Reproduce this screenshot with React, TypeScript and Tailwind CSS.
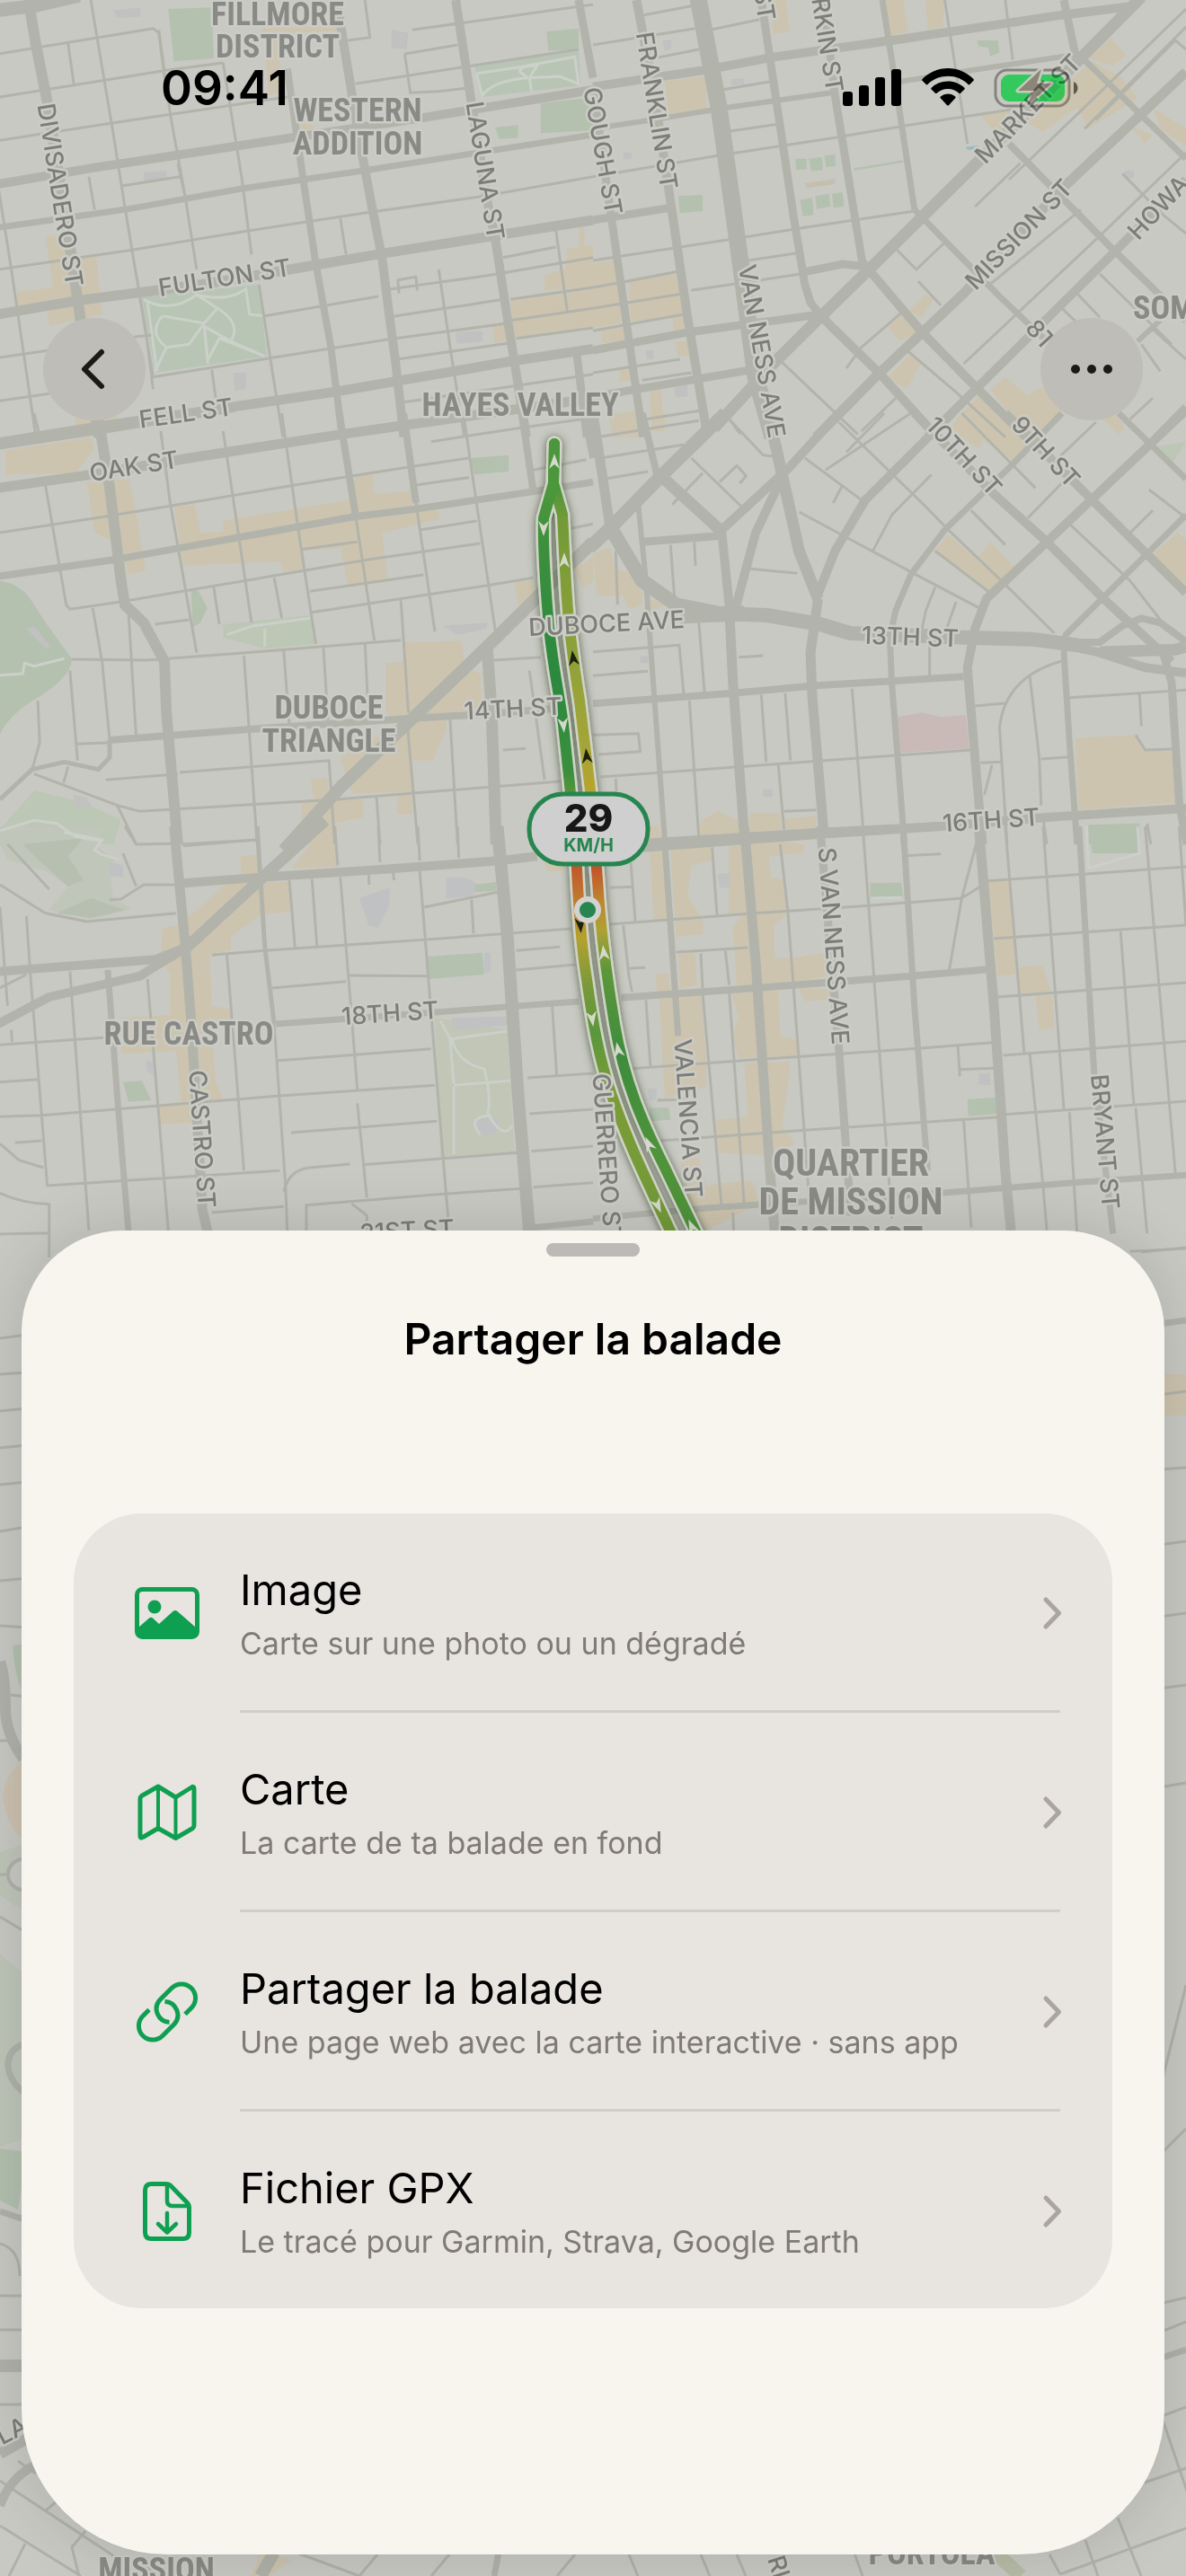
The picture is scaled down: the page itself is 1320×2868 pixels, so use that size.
import type { ReactNode } from "react";

type Tile = {
  id: string;
  x: number;
  y: number;
  areas: [string, string][];
  roads: [number, string][];
};

const SAND = "#cdc4af";
const GRASS = "#b4c1af";
const PARK = "#bdc7b6";

/* Street geometry, one entry per map tile, in tile units (1568 x 1440 over 660 x 480). */
const tiles: Tile[] = [
  {
    id: "nw",
    x: 0,
    y: 0,
    areas: [
      [SAND, "M120 790 180 780 210 860 255 860 270 1050 130 1088 125 1030 45 1022 45 975 140 960Z M200 1390 310 1390 300 1410 240 1430 200 1430Z"],
      [SAND, "M690 95 890 85 890 105 740 112 740 310 710 320 700 140Z M790 415 830 415 830 432 790 432Z"],
      [SAND, "M1350 1005 1568 955 1568 1090 1360 1130Z M1500 830 1530 825 1530 760 1545 760 1545 820 1568 820 1568 960 1440 970 1440 920 1495 900Z M1300 1085 1360 1070 1370 1130 1310 1145Z"],
      [GRASS, "M445 30 560 25 565 195 460 205Z M1445 105 1530 95 1530 165 1450 170Z M1430 345 1568 325 1568 435 1430 445Z M1310 425 1370 418 1370 460 1320 465Z"],
      ["#b8c5b5", "M375 990 685 950 705 1190 410 1245Z M1255 220 1530 170 1535 285 1270 325Z"],
      ["#c0c1c0", "M300 35 370 25 372 55 310 60Z M380 575 440 570 440 600 380 605Z M1035 100 1080 110 1075 165 1035 160Z M1205 1110 1275 1105 1275 1140 1208 1148Z M618 1245 650 1245 650 1300 620 1305Z"],
    ],
    roads: [
      [15, "M-10 35 90 20 210 -15"],
      [12, "M75 0 95 150 125 340 180 780 205 1000 240 1300 262 1460"],
      [10, "M-5 615 250 560 770 460 1110 395 1568 300"],
      [11, "M-5 1050 200 1005 560 945 835 885 1020 845 1568 735"],
      [11, "M-10 1480 260 1425 880 1310 1360 1205 1568 1165"],
      [7, "M-5 760 330 700 640 630 960 570 1568 450"],
      [8, "M760 230 790 500 835 880 875 1160 905 1460"],
      [10, "M890 0 930 310 955 500 985 700 1010 860 1030 1060 1045 1200 1068 1460"],
      [10, "M1205 0 1245 330 1290 680 1310 800 1340 1050 1392 1460"],
      [9, "M1530 0 1568 260 M1525 1180 1552 1460"],
      [3, "M240 0 300 450 330 690 355 880 385 1100 405 1300 M420 100 450 380 490 660 520 900 M590 210 640 600 665 850 M685 950 715 1200 748 1460 M-5 180 405 95 420 110 435 260 M180 145 195 280 M-5 325 440 235 590 210 M-5 470 300 410 780 320 M-5 900 350 835 660 770 970 710 1280 655 1568 590 M235 590 250 700 M325 620 475 590 M470 545 490 660 M-5 1195 130 1170 M-5 1340 130 1315 M-5 620 30 900 95 1460 M700 1055 1000 990 M400 1260 720 1195 1020 1135 1340 1080 M370 995 405 1260 M355 1125 400 1120 M900 730 915 850"],
      [3, "M1160 900 1195 1200 1228 1460 M1030 1050 1040 1057 1330 1000 M1050 1200 1350 1145 M1010 970 1290 920 1568 860 M1055 980 1052 935 1100 925 1103 970 M920 135 978 125 965 0 M1070 180 1210 150 M1070 180 1085 310 1160 305 1230 295 M940 280 1220 225 1530 165 M1090 100 1568 15 M1470 770 1500 1040 M1330 860 1470 825 M1350 1000 1568 960 M1350 1070 1568 1030 M1365 1130 1568 1095 M560 1235 575 1370 M1060 1345 1568 1250"],
    ],
  },
  {
    id: "ne",
    x: 660,
    y: 0,
    areas: [
      [SAND, "M190 270 300 255 300 375 200 390Z M475 0 510 0 520 105 475 115Z M770 0 820 0 835 105 785 120Z M880 0 930 0 925 90 885 100Z M1370 125 1410 185 1370 220 1310 195Z M1320 205 1400 260 1440 330 1310 430 1280 360 1190 440 1150 410 1260 270Z M1025 385 1110 370 1090 440 1060 440Z M1480 360 1568 430 1568 490 1500 430Z M1420 420 1480 450 1460 480Z"],
      [SAND, "M0 880 60 870 75 1080 0 1095Z M95 930 220 910 240 1050 100 1075Z M20 1100 80 1095 95 1140 25 1145Z M210 1060 240 1060 240 1110 215 1110Z M880 985 900 1000 870 1060 835 1040Z M780 1090 820 1050 860 1110 810 1140Z M840 1180 870 1210 830 1300 780 1260Z M960 1400 1020 1320 1120 1440 1120 1460 940 1460Z M1050 1300 1090 1260 1150 1320 1190 1290 1240 1370 1170 1450 1130 1430Z M45 1390 110 1370 120 1460 50 1460Z M70 1230 100 1225 100 1270 70 1275Z M215 1140 255 1140 255 1190 225 1190Z M150 1300 180 1300 190 1440 155 1440Z"],
      [GRASS, "M535 530 565 530 565 565 537 567Z M570 530 605 525 608 568 578 572Z M612 520 640 515 642 555 616 558Z M548 668 580 660 583 718 555 722Z M587 655 625 648 627 690 592 698Z M632 648 660 642 664 690 636 694Z M225 655 290 650 290 705 230 712Z M1015 135 1070 135 1075 175 1050 188 1045 158 1020 155Z M690 562 820 535 820 542 690 570Z"],
      ["#98bcbc", "M985 492 1020 485 1003 500 990 500Z"],
      ["#c6beaf", "M560 612 640 598 640 615 565 628Z"],
      ["#c0c1c0", "M185 135 208 135 205 165 188 168Z M365 265 400 262 400 282 368 284Z M80 510 105 510 100 530 80 530Z M215 1295 250 1285 250 1325 218 1325Z M140 1170 160 1170 160 1200 142 1200Z M1405 570 1430 570 1430 595 1408 598Z"],
    ],
    roads: [
      [19, "M278 -5 333 360 388 860 430 1260 475 1460"],
      [13, "M1450 -10 1010 550 730 900 600 1060 480 1210 320 1430"],
      [10, "M0 290 290 235 480 190 790 135 1240 50 1430 20"],
      [9, "M1245 0 1275 180"],
      [7, "M1295 195 1450 385 1568 530"],
      [11, "M1568 240 1240 630 980 980 750 1255 590 1460"],
      [10, "M1568 600 1380 840 1020 1290 885 1460"],
      [10, "M115 0 160 300 200 630 250 1060 303 1460"],
      [9, "M0 290 50 740 132 1460 M445 0 530 720 560 950 575 1010 600 1050"],
      [9, "M610 0 640 320 715 900 M560 908 660 882 720 890"],
      [10, "M715 880 870 1110 1010 1290 1145 1460 M600 1050 630 1090 760 1250 910 1460"],
      [7, "M850 700 1075 990 1200 1140 M765 0 790 200 850 700"],
      [8, "M1100 480 1380 840 1568 1070"],
      [9, "M0 735 200 695 M0 1170 250 1110 600 1050 M0 1325 420 1235 M1568 1360 1490 1460"],
      [6, "M0 430 160 400 350 360 630 310 M800 275 1000 235 1290 180 M1440 1140 1500 1070"],
      [3, "M0 590 330 520 640 460 850 415 1110 365 M0 870 360 800 560 760 850 705 M0 150 270 95 M160 195 280 165 M135 50 260 20 M310 100 440 65 M340 300 480 270 M350 440 490 415 M410 870 540 845 M260 970 550 915 M0 960 90 940 230 905 M0 1030 240 980 M0 1105 240 1050 M930 0 990 480 M1090 0 1110 200 M800 830 855 900 930 810 M1130 545 1010 690"],
      [3, "M1568 30 1290 370 1100 600 M1568 90 1300 430 M1568 165 1540 135 1330 400 M1400 580 1500 710 1568 780 M1568 510 1330 800 980 1215 M1290 700 1040 960 M1340 915 1530 1150 M860 940 920 1020 M820 1040 710 1160 670 1230 M830 1170 960 1310 1090 1460 M500 1210 700 1450 M360 1400 390 1450 M1240 1030 1290 1090 M1280 980 1340 1060 M1450 1150 1500 1240 M1480 1100 1568 1200 M1480 1330 1420 1400 M0 1245 230 1200 M130 1270 260 1245 M140 1400 290 1370 M710 1440 800 1330"],
    ],
  },
  {
    id: "w",
    x: 0,
    y: 460,
    areas: [
      [SAND, "M15 125 240 80 250 120 200 200 15 205Z M230 230 340 220 355 300 385 525 340 540 320 440 250 400Z M460 310 515 305 530 400 590 395 590 360 920 290 940 210 985 205 990 270 1085 260 1090 310 1160 325 1160 355 1010 400 1025 550 920 575 900 450 800 460 800 525 750 530 740 495 485 510Z"],
      [SAND, "M1020 835 1065 830 1070 765 1220 760 1230 850 1270 870 1275 1000 1180 1010 1180 1060 1145 1160 1090 1160 1095 1265 930 1270 900 1150 1050 1040 1020 1000Z M1360 560 1410 560 1410 640 1370 645Z M820 1220 865 1220 870 1290 960 1290 960 1350 885 1370 885 1440 790 1440 800 1300 830 1290Z M1050 1275 1090 1275 1090 1340 1050 1340Z M1520 520 1568 480 1568 560 1540 590Z"],
      ["#b5c1af", "M0 560Q60 570 90 640Q130 720 190 820Q190 880 100 950Q30 1000 0 1070Z"],
      [PARK, "M0 1390 90 1260 220 1300 320 1360 300 1440 0 1440Z M590 705 820 675 835 770 700 785 590 750Z"],
      [GRASS, "M505 585 525 595 548 650 530 700 510 715Z M1245 150 1345 140 1345 195 1255 205Z"],
      ["#c0c1c0", "M70 720 90 712 135 780 120 785Z M195 1275 230 1285 240 1310 200 1315Z M1170 710 1290 700 1285 720 1210 740Z"],
    ],
    roads: [
      [11, "M-10 107 260 55 620 -20"],
      [11, "M-5 250 270 200 500 150 905 70 1568 -50"],
      [12, "M258 0 290 250 320 560 330 640 380 700 435 830 440 1000 470 1440"],
      [8, "M-5 545 300 490 940 345 1100 320 1420 260 1568 230"],
      [8, "M290 1092 700 1052 1080 1020 1220 1010 1490 985"],
      [14, "M1568 430 1400 640 1280 790 900 1250 750 1460"],
      [13, "M1288 780 1300 1000 1312 1440"],
      [8, "M897 0 940 340 M1067 0 1100 300 M1380 0 1410 260"],
      [9, "M1545 0 1570 150"],
      [5, "M0 1290 85 1190 170 1165 260 1190 290 1150 290 1090"],
      [3, "M90 0 110 100 M120 240 175 640 185 655 320 630 970 490 1270 435 M-5 400 280 345 450 310 780 240 1080 180 1240 150 M425 60 450 300 520 800 M590 60 630 400 665 700 M745 0 790 400 835 770 M565 580 580 705 M725 550 745 685 M820 595 1120 540 M825 665 980 635 1290 575 1410 550 M410 705 500 690 M940 340 990 760 M1100 300 1150 730 M1060 625 1080 1000 M1225 0 1310 730 M190 822 390 825 650 800 1060 758 M1100 240 1240 215 M1110 390 1260 360 M795 455 945 430"],
      [3, "M245 650 270 830 290 1090 M340 670 360 1080 M185 860 205 1160 M100 960 105 1100 85 1190 M645 810 680 1440 M750 790 765 1040 M855 780 868 1040 M965 765 975 1030 M475 1200 870 1160 885 1440 M280 1225 470 1205 M90 1205 310 1310 370 1330 890 1290 1480 1230 M310 1310 360 1440 M995 1275 1005 1440 M1075 1010 1105 1440 M1190 1020 1210 1440 M1400 860 1440 1225 M1305 825 1430 815 M1330 1125 1390 1120 M480 1440 680 1425 M180 1180 168 1235 M205 1105 290 1100 M1140 95 1370 50 1568 15 M1410 190 1550 155 M1510 385 1568 370"],
    ],
  },
  {
    id: "e",
    x: 660,
    y: 460,
    areas: [
      [SAND, "M40 0 130 0 130 50 50 65Z M165 0 190 0 190 35 160 40Z M0 470 45 450 60 520 90 530 130 600 130 640 95 655 80 610 10 610Z M150 620 200 640 150 660Z M970 5 1080 0 1140 60 1160 100 1110 155 1030 90 1020 120 945 55Z M1180 0 1245 0 1200 40Z M1355 0 1380 0 1405 45 1390 70 1350 25Z M940 405 1080 560 1055 600 900 465Z M1050 430 1115 515 1085 560 1020 480Z M1480 470 1545 400 1568 420 1568 580Z"],
      [SAND, "M1275 1085 1440 1075 1460 1125 1530 1130 1540 1300 1285 1325Z M280 1420 285 1360 330 1330 385 1360 385 1410Z M415 1335 495 1335 500 1390 415 1405Z M505 1355 590 1345 590 1390 505 1395Z M140 1380 175 1380 180 1430 140 1430Z"],
      ["#c9bab7", "M805 1015 870 1000 920 1015 985 1008 995 1120 808 1135Z"],
      [GRASS, "M1310 1375 1445 1370 1445 1440 1310 1440Z"],
      [PARK, "M1490 110 1568 95 1530 170Z"],
      ["#bfc0c0", "M450 1258 475 1258 475 1280 450 1280Z M125 812 145 812 145 835 125 835Z"],
    ],
    roads: [
      [15, "M350 0 180 210 45 385 -10 450"],
      [11, "M0 0 45 380 130 560"],
      [16, "M45 380 130 560 220 640 330 668 460 675 600 705 680 735 1000 750 1160 755 1280 775"],
      [17, "M230 678 400 668"],
      [10, "M1250 775 1340 800 1460 850 1568 868"],
      [8, "M1250 765 1340 765 1400 710 1450 685 1500 700 1570 765"],
      [13, "M1340 798 1540 790 1568 780"],
      [13, "M462 0 485 120 545 460 595 620"],
      [11, "M595 620 575 800 580 950 610 1400"],
      [10, "M650 0 520 180 340 390 360 640 M490 240 430 400 375 660"],
      [11, "M360 640 370 900 400 1410"],
      [13, "M180 210 340 395"],
      [9, "M130 430 330 410"],
      [10, "M950 0 720 290 640 460 590 620"],
      [7, "M1240 0 1110 170 930 390 840 540 800 660 785 750 790 900 820 1380 822 1440"],
      [10, "M1568 -10 1200 430 1040 620 1010 720 990 850 1010 1150 1030 1440"],
      [10, "M850 0 1060 270 1200 430 1350 620 1530 830 M1090 0 1320 290 1568 600"],
      [7, "M1390 0 1568 220 M1568 340 1250 740 1245 800 1260 1100 1280 1440"],
      [9, "M1510 810 1530 900 1550 1300 1570 1440"],
      [8, "M0 970 160 955 370 935 590 910 980 880"],
      [10, "M140 1436 600 1400 920 1380 1200 1350 1568 1320"],
      [8, "M130 0 170 210"],
      [6, "M120 310 140 560 150 740 190 1430"],
      [3, "M10 80 280 25 M20 150 240 105 M30 220 145 195 M205 440 215 610 M268 430 271 510 M415 520 540 535 M545 330 840 530 1020 650 M560 150 710 290 M650 30 870 300 940 390 1080 560 1220 735 M840 0 615 190 M770 0 670 130 M895 205 790 340 740 460 M660 240 635 300 M260 150 395 315 M335 230 380 175 405 210 388 235 M290 200 210 305 M360 20 450 140 480 145 M905 460 1050 600 M905 580 880 660 870 720 M960 630 935 720 M1000 325 1090 440 M975 0 1170 250 M1330 30 1230 150 M1250 220 1150 350"],
      [3, "M1260 370 1420 560 1500 690 M1480 325 1420 400 M1470 255 1568 350 M890 770 890 880 M385 815 450 810 M0 797 228 775 240 940 M0 877 145 862 M280 700 295 935 M255 960 280 1420 M445 940 458 1165 M508 935 522 1160 M685 920 715 1400 M20 1215 400 1180 1000 1125 M490 1175 505 1390 M1010 978 1095 968 M1240 828Q1090 880 1075 1050L1095 1440 M1155 880 1180 1150 1185 1310 M1185 1155 1260 1148 M1025 1168 1080 1165 M1055 1175 1035 1275 M1260 950 1568 925 M1445 935 1450 1045 M1435 1075 1460 1125 1530 1122 M15 1140 125 1130 120 1070 0 1075 M505 1330 590 1325 M1190 1350 1200 1440 M1465 1370 1475 1440 M60 1220 62 1265 M60 460 65 640"],
    ],
  },
  {
    id: "sw",
    x: 0,
    y: 920,
    areas: [
      [SAND, "M635 100 680 95 685 160 640 160Z M770 140 860 0 890 0 895 135Z M430 340 475 330 600 190 765 185 770 285 690 295 610 370 610 415 555 425 560 600 605 610 615 660 560 680 570 850 590 910 480 930 465 750 320 760 320 640 450 630 450 500 425 430Z M420 935 505 930 510 990 425 995Z M1440 120 1500 115 1490 150 1445 150Z"],
      ["#c0c6ba", "M0 0 280 0 250 60 300 110 290 150 300 240 350 275 240 310 130 280 180 200 120 150 20 110 0 60Z"],
      ["#c1c6b7", "M1150 640 1340 680 1360 1090 1165 1105Z"],
      ["#b7bfb0", "M60 60 220 40 180 100 220 180 180 200 100 110Z M150 290 240 240 330 280 240 305Z"],
      [GRASS, "M1130 435 1275 422 1280 495 1135 510Z M325 855 375 850 400 915 340 920Z M1255 195 1315 185 1310 215 1255 220Z"],
      ["#c0c1c2", "M1180 170 1225 170 1260 190 1250 235 1180 240Z M950 240 1030 205 1030 260 1000 340 975 330Z M1195 640 1340 635 1340 665 1200 680Z M1255 975 1320 975 1310 1030 1270 1030Z M1280 422 1298 422 1298 485 1280 488Z M290 120 325 130 325 170 290 165Z M385 780 405 790 405 830 390 820Z"],
    ],
    roads: [
      [11, "M460 0 490 400 505 640 535 1280 550 1360"],
      [13, "M860 -20 690 175 540 350 480 420"],
      [10, "M500 400 420 460 370 500 130 570 -5 660"],
      [10, "M485 190 690 170 1000 145 1320 115 1420 100 M-5 485 410 445 480 410"],
      [14, "M1315 0 1340 340 1370 900 1400 1360"],
      [7, "M730 660 1160 620 1530 585 M285 480 310 900 340 1360 M1410 1340 1568 1320"],
      [5, "M680 0 700 400 725 660"],
      [3, "M725 660 755 1200 760 1360 M765 180 780 405 M825 175 838 400 M900 170 925 560 945 880 M1110 150 1145 700 1185 1310 M1040 155 1042 180 M975 160 976 195 M885 0 893 130 M1000 0 1005 120 M1105 0 1110 115 M1210 0 1213 105 M485 65 680 45 M560 430 700 415 1130 378 1510 342 M330 0 360 60 460 58 M325 90 360 200 M290 245 320 243 380 195 465 195 M0 195 120 290 230 318 465 290 M600 430 645 1150 M390 510 445 1350 M185 485 235 1350 M80 490 125 1200 740 1150 M0 730 280 705 M-5 855 100 845 M-5 970 110 965 740 900 1150 865 M40 1057 110 1050 M720 540 915 518 M925 498 1130 500"],
      [3, "M730 783 1140 743 M770 1023 1155 985 M945 925 970 1240 M750 1220Q765 1145 820 1140L925 1128 M960 1130 1370 1090 M810 1355 810 1265 1150 1230 1380 1210 M560 1290 750 1270 M0 270 20 600 M70 300 80 490 M0 540 70 495 M1122 270 1315 220 M1247 245 1252 358 M1365 415 1480 403 M1365 480 1520 462 M1395 840 1568 825 M1400 960 1568 945 M1405 1085 1568 1068 M1410 1205 1568 1190 M1460 600 1472 830 M0 1060 50 1115 115 1140 M0 1225Q60 1260 130 1262L130 1440 M0 1362 130 1358 M30 680 32 720 M20 60 130 210 M930 1260 970 1300 970 1350"],
    ],
  },
  {
    id: "se",
    x: 660,
    y: 920,
    areas: [
      [SAND, "M150 80 190 80 200 310 160 315Z M205 75 310 68 315 115 260 130 250 230 290 310 290 360 220 370Z M360 60 495 50 560 60 555 90 465 100 470 170 505 180 515 290 480 330 480 440 530 440 620 420 620 500 535 520 380 530 370 340 390 300 360 290Z M225 425 270 420 275 530 230 540Z M165 495 200 490 205 560 170 570Z M175 575 225 570 285 560 300 790 300 870 190 910Z M365 550 490 545 495 700 545 715 545 765 385 775 370 700 385 640Z"],
      [SAND, "M400 790 520 785 520 830 500 1000 535 1060 470 1100 330 1090 325 980 410 970Z M230 1100 280 1110 300 1200 420 1180 440 1260 300 1350 260 1300Z M545 540 640 545 620 580 560 585Z M1045 185 1105 185 1120 495 1070 500Z M1125 470 1190 465 1210 555 1130 560Z M1170 565 1215 565 1220 675 1180 680Z"],
      [GRASS, "M1310 0 1445 0 1445 90 1320 90Z M733 190 815 188 820 235 733 240Z M990 912 1065 905 1070 960 992 968Z M150 940 200 940 205 980 150 985Z"],
      ["#c0c1c1", "M330 160 360 155 360 205 335 205Z M1020 825 1050 825 1050 865 1020 862Z M145 875 170 875 165 915 150 915Z"],
    ],
    roads: [
      [11, "M400 0 430 450 465 1100 480 1350 M1020 0 1060 600 1090 1150 1105 1350"],
      [9, "M600 0 650 740 682 1300"],
      [7, "M820 0 850 600 885 1150 M1285 0 1325 820 1375 1360 M190 60 225 700 M0 1310 300 1275 480 1260 920 1225 1270 1190 1568 1165"],
      [10, "M0 85 150 70 400 45 620 25 920 0"],
      [8, "M75 572 430 540 840 500 1045 478"],
      [3, "M45 327 410 292 730 265 975 240 1025 200 M100 120 112 320 M315 70 328 298 M495 60 515 280 575 1300 M45 205 103 202 M220 420 410 405 M285 425 290 540 M350 415 360 530 M80 330 95 500 103 552 M90 475 138 472 M140 580 152 805 M95 810 420 780 860 742 1055 722 M290 560 340 1270 M360 550 400 1265 M715 30 790 1310 M830 98 920 92 M1015 50 975 240 942 480 M1090 0 1140 755 M1190 0 1245 945 M1045 182 1568 135 M1060 375 1568 330 M1070 570 1568 522 M1085 765 1568 718"],
      [3, "M1090 962 1568 918 M1460 0 1540 1160 M1395 350 1430 930 M1155 760 1190 1200 1200 1350 M965 735 970 835 M970 812 1060 808 M180 1050 560 1015 1090 970 M980 980 1000 1340 M1260 955 1280 1360 M1435 940 1465 1360 M1420 1420 1568 1410 M1550 0 1568 330 M170 915 245 912 M370 1290 372 1350"],
    ],
  },
];

/* Park footpaths, in tile units. */
const footpaths: [number, number, string][] = [
  [0, 0, "M380 1000Q450 1050 520 985Q600 1010 650 965L660 1050 700 1055 M520 985 575 1030 540 1080 430 1055 M430 1055Q390 1110 440 1160L410 1240 M440 1160 500 1150 540 1080 M575 1030Q640 1080 610 1140L540 1090 550 1215 M610 1140 700 1190 580 1130 550 1200 M390 1010 415 1240"],
  [0, 0, "M1260 245 1370 225 1520 190 1530 280 1480 255 1400 260 1405 305 M1260 245 1275 320Q1300 270 1395 260L1375 240Q1370 220 1420 220L1400 260"],
  [0, 460, "M0 875 60 870 65 835 90 845 170 820 M0 1395 90 1360 150 1370 200 1415 270 1430 M600 740 670 710 820 685 M700 780 700 720"],
  [0, 920, "M170 20 270 45 250 80 270 95 315 110 M1165 650 1190 710 1340 685 M1195 710Q1210 790 1280 810Q1300 900 1290 960Q1330 1050 1355 1000 M1200 865 1350 850 M1200 870 1200 1095 M1190 710 1200 860 M1270 1030Q1230 970 1300 965"],
  [660, 920, "M1305 0 1310 140 1445 90 1440 0 M735 240 815 238"],
];

type Label = [string, number, number, number, ("start" | "middle")?];

const streets: Label[] = [
  ["DIVISADERO ST", 67, 217, 81],
  ["LAGUNA ST", 540, 190, 81],
  ["FULTON ST", 250, 309, -9],
  ["FELL ST", 207, 460, -8],
  ["OAK ST", 149, 519, -9],
  ["GOUGH ST", 671, 168, 80],
  ["FRANKLIN ST", 731, 123, 81],
  ["VAN NESS AVE", 848, 391, 80],
  ["ST", 851, 5, 81],
  ["RKIN ST", 921, 50, 81],
  ["MARKET ST", 1144, 121, -46],
  ["MISSION ST", 1134, 261, -46],
  ["HOWA", 1260, 262, -47, "start"],
  ["8TH ST", 1147, 360, 48, "start"],
  ["10TH ST", 1073, 508, 47],
  ["9TH ST", 1164, 503, 47],
  ["DUBOCE AVE", 675, 694, -3],
  ["14TH ST", 571, 789, -3],
  ["13TH ST", 1013, 709, 2],
  ["16TH ST", 1103, 913, -4],
  ["18TH ST", 434, 1128, -4],
  ["21ST ST", 453, 1370, -3],
  ["CASTRO ST", 225, 1268, 86],
  ["GUERRERO ST", 669, 1195, 86, "start"],
  ["VALENCIA ST", 766, 1245, 86],
  ["S VAN NESS AVE", 928, 1053, 86],
  ["BRYANT ST", 1230, 1271, 85],
  ["RI", 863, 2846, 72, "start"],
  ["LA", -2, 2714, -27, "start"],
];

const districts: Label[] = [
  ["FILLMORE", 309, 16, 36],
  ["DISTRICT", 309, 52, 36],
  ["WESTERN", 398, 123, 36],
  ["ADDITION", 398, 160, 36],
  ["HAYES VALLEY", 579, 451, 36],
  ["SOMA", 1261, 343, 36, "start"],
  ["DUBOCE", 366, 788, 36],
  ["TRIANGLE", 366, 825, 36],
  ["RUE CASTRO", 210, 1151, 36],
  ["QUARTIER", 947, 1294, 42],
  ["DE MISSION", 947, 1337, 42],
  ["DISTRICT", 947, 1380, 42],
  ["MISSION", 174, 2861, 36],
  ["PORTOLA", 1037, 2843, 36],
];

const OUTBOUND =
  "M617 494 616 538 605 577C604 610 607 650 610 687C613 730 622 770 627 807L634 873 642 967C644 1010 648 1060 653 1090C660 1140 667 1180 681 1220C700 1275 720 1315 760 1400";
const INBOUND =
  "M617 494 616 538 626 573C628 610 629 650 633 690C636 720 641 755 645 780L657 880 665 980C668 1030 674 1080 684 1140C695 1205 715 1250 740 1300L788 1400";

/* Direction arrows along the ride: x, y, heading, dark. */
const arrows: [number, number, number, boolean][] = [
  [617, 514, 0, false],
  [605, 588, 180, false],
  [628, 624, 0, false],
  [638, 733, -8, true],
  [627, 807, 174, false],
  [653, 842, -6, true],
  [646, 1030, 176, true],
  [672, 1061, -6, false],
  [659, 1134, 172, false],
  [688, 1169, -12, false],
  [722, 1274, -24, false],
  [732, 1342, 155, false],
  [770, 1366, -24, false],
];

function CityMap() {
  return (
    <svg
      className="absolute inset-0 h-full w-full"
      viewBox="0 0 1320 2868"
      preserveAspectRatio="xMidYMin slice"
      role="img"
      aria-label="Carte de la balade à San Francisco"
    >
      <defs>
        <linearGradient id="out" gradientUnits="userSpaceOnUse" x1="0" y1="490" x2="0" y2="1370">
          <stop offset="0" stopColor="#4c963b" />
          <stop offset="0.07" stopColor="#4c963b" />
          <stop offset="0.13" stopColor="#3d903d" />
          <stop offset="0.3" stopColor="#2b893f" />
          <stop offset="0.42" stopColor="#3a8f3d" />
          <stop offset="0.49" stopColor="#8a9c36" />
          <stop offset="0.54" stopColor="#c0582c" />
          <stop offset="0.585" stopColor="#bf7d2e" />
          <stop offset="0.63" stopColor="#b3a12f" />
          <stop offset="0.69" stopColor="#79993a" />
          <stop offset="0.75" stopColor="#5a973b" />
          <stop offset="0.82" stopColor="#7b9c38" />
          <stop offset="1" stopColor="#739a38" />
        </linearGradient>
        <linearGradient id="in" gradientUnits="userSpaceOnUse" x1="0" y1="490" x2="0" y2="1370">
          <stop offset="0" stopColor="#4c963b" />
          <stop offset="0.06" stopColor="#4c963b" />
          <stop offset="0.1" stopColor="#739a38" />
          <stop offset="0.25" stopColor="#8ba03a" />
          <stop offset="0.38" stopColor="#a3a538" />
          <stop offset="0.45" stopColor="#b9a42c" />
          <stop offset="0.54" stopColor="#c2522c" />
          <stop offset="0.58" stopColor="#bd832e" />
          <stop offset="0.62" stopColor="#aea233" />
          <stop offset="0.67" stopColor="#5d973a" />
          <stop offset="0.78" stopColor="#3d8c3d" />
          <stop offset="0.9" stopColor="#4f933b" />
          <stop offset="1" stopColor="#4f933b" />
        </linearGradient>
        <filter id="glow" filterUnits="userSpaceOnUse" x="540" y="440" width="300" height="960">
          <feDropShadow dx="0" dy="1" stdDeviation="5" floodColor="#3b4a30" floodOpacity="0.8" />
        </filter>
      </defs>

      <rect width="1320" height="2868" fill="#c8c9c3" />

      {tiles.map((t) => (
        <g key={t.id} transform={`translate(${t.x} ${t.y}) scale(0.42092 0.33333)`}>
          {t.areas.map(([fill, d], i) => (
            <path key={i} d={d} fill={fill} />
          ))}
        </g>
      ))}
      {footpaths.map(([x, y, d], i) => (
        <g key={i} transform={`translate(${x} ${y}) scale(0.42092 0.33333)`}>
          <path d={d} fill="none" stroke="#cbd0c8" strokeWidth="3" vectorEffect="non-scaling-stroke" />
        </g>
      ))}
      {tiles.map((t) => (
        <g
          key={t.id}
          transform={`translate(${t.x} ${t.y}) scale(0.42092 0.33333)`}
          fill="none"
          stroke="#b2b4ac"
          strokeLinejoin="round"
        >
          {t.roads.map(([w, d], i) => (
            <path key={i} d={d} strokeWidth={w} vectorEffect="non-scaling-stroke" />
          ))}
        </g>
      ))}

      {/* Streets that show beside and below the sheet */}
      <rect x="1290" y="1530" width="30" height="46" fill={SAND} />
      <path d="M14 1832Q18 1880 30 1890V1830Z" fill={GRASS} />
      <path d="M30 1958Q4 1972 3 2005Q10 2040 30 2050Z" fill="#cdc2b0" />
      <path d="M0 2062 30 2052 30 2130 0 2110Z M0 2176 30 2200 30 2380 0 2390Z" fill="#bfc6b9" />
      <path d="M0 2392 30 2396 20 2460 0 2450Z" fill={GRASS} />
      <path d="M290 2840 325 2850 300 2868 280 2868Z" fill={SAND} />
      <g fill="none" stroke="#b0b2aa" strokeWidth="3">
        <path d="M0 1490 30 1486 M0 1530 30 1528 M0 1571 30 1568 M0 1612 30 1609 M0 1653 30 1650 M0 1705 30 1700 M0 1760 30 1757 M0 1810 30 1812 M12 1887 30 1889 M0 1938H14 M0 2087H10 M0 2134 30 2152 M0 2498Q22 2504 22 2534 M0 2556H30 M0 2594H30 M0 2677H30 M1270 1394 1320 1389 M1290 1553 1320 1549 M1290 1636 1320 1634 M1290 1720 1320 1716 M1290 1800 1320 1796 M1290 1880 1320 1876 M1290 1990 1320 1985 M1290 2330 1320 2210 M1290 2400 1320 2370 M1290 2565 1320 2558 M1290 2597 1320 2585 M1280 2695 1320 2680" />
        <path d="M0 2762 130 2848 190 2868 M20 2740 40 2754 M50 2796 64 2784 M0 2812 90 2868 M28 2832 10 2868 M95 2818 80 2836 88 2868 M960 2868 950 2840 M1244 2803 1270 2868 M1292 2688 1330 2800 M1274 2764 1320 2748 M1180 2866 1320 2815 M1208 2828 1222 2868 M1168 2844 1180 2866 M330 2842 400 2868 M420 2844 400 2868 M500 2844 480 2868 M640 2844 620 2868 M700 2844 710 2868 M780 2844 790 2868 M820 2844 830 2868" />
        <path d="M38 2745Q10 2760 0 2790" strokeWidth="10" />
        <path d="M32 2714 0 2732 M0 1850Q6 1866 6 1902Q6 1930 26 1958" strokeWidth="12" />
        <path d="M0 2634H30 M305 2842 290 2868" strokeWidth="14" />
        <path d="M30 2275Q8 2280 9 2302Q12 2320 30 2332 M0 2462 30 2472 M1290 1474 1320 1470 M1290 2626 1320 2616 M555 2842 550 2868" strokeWidth="7" />
        <circle cx="26" cy="2087" r="17" strokeWidth="4" fill="#c8c9c3" />
      </g>
      <path d="M1108 2842 1136 2868" stroke="#b7bda8" strokeWidth="16" />

      {/* Ride */}
      <g fill="none" strokeLinecap="round" strokeLinejoin="round">
        <g filter="url(#glow)" stroke="#d0d4c6" strokeWidth="17">
          <path d={OUTBOUND} />
          <path d={INBOUND} />
        </g>
        <path d={INBOUND} stroke="url(#in)" strokeWidth="12" />
        <path d={OUTBOUND} stroke="url(#out)" strokeWidth="12" />
      </g>
      {arrows.map(([x, y, r, dark], i) => (
        <path
          key={i}
          d="M0 -9 6 8 0 3 -6 8Z"
          transform={`translate(${x} ${y}) rotate(${r})`}
          fill={dark ? "#1d2110" : "#d5d9cd"}
        />
      ))}

      <g
        className="font-['Inter',sans-serif] text-[27px] font-medium"
        fill="#7c7d78"
        stroke="#cbccc6"
        strokeWidth="5"
        strokeLinejoin="round"
        paintOrder="stroke"
        dominantBaseline="central"
      >
        {streets.map(([text, x, y, r, anchor = "middle"]) => (
          <text key={text} textAnchor={anchor} transform={`translate(${x} ${y}) rotate(${r})`}>
            {text}
          </text>
        ))}
      </g>
      <g
        className="font-['Liberation_Sans_Narrow','Arial_Narrow','Roboto_Condensed','Liberation_Sans',sans-serif] font-bold"
        fill="#898985"
        stroke="#cbccc6"
        strokeWidth="5"
        strokeLinejoin="round"
        paintOrder="stroke"
        dominantBaseline="central"
      >
        {districts.map(([text, x, y, size, anchor = "middle"]) => (
          <text key={text + y} x={x} y={y} fontSize={size} textAnchor={anchor}>
            {text}
          </text>
        ))}
      </g>

      {/* Current speed and position */}
      <circle cx="654" cy="1013" r="15" fill="#d2d3d0" />
      <circle cx="654" cy="1013" r="9" fill="#27864f" />
      <rect x="589" y="884" width="132" height="78" rx="38" fill="#cfcfd0" stroke="#27864f" strokeWidth="5" />
      <g className="font-['Inter',sans-serif]" textAnchor="middle">
        <text x="655" y="926" fontSize="42" fontWeight="800" fill="#171717">
          29
        </text>
        <text x="655" y="948" fontSize="20" fontWeight="700" fill="#27864f">
          KM/H
        </text>
      </g>
    </svg>
  );
}

function StatusBar() {
  return (
    <header className="flex items-center justify-between pt-[66px] pr-[119px] pl-[179px]">
      <time className="text-[53px] leading-[64px] font-semibold">09:41</time>
      <div className="flex items-center gap-[22px]">
        <svg width="66" height="44" viewBox="0 0 66 44" aria-label="Réseau mobile">
          <rect x="0" y="26" width="11" height="16" rx="3" />
          <rect x="18" y="19" width="11" height="23" rx="3" />
          <rect x="36" y="10" width="11" height="32" rx="3" />
          <rect x="54" y="1" width="11" height="41" rx="3" />
        </svg>
        <svg width="58" height="44" viewBox="0 0 58 44" aria-label="Wi-Fi">
          <path d="M29 0C40 0 50 4.500 57.500 12c.5.5.5 1.300 0 1.800l-4.200 4.200c-.5.5-1.200.5-1.700 0C45.500 12 37.500 8.800 29 8.800S12.500 12 6.400 18c-.5.5-1.200.5-1.700 0L.5 13.800c-.5-.5-.5-1.300 0-1.800C8 4.500 18 0 29 0Z" />
          <path d="M29 14.500c7 0 13.500 2.700 18.400 7.200.5.5.5 1.300 0 1.800l-4.300 4.200c-.5.5-1.200.5-1.700 0A18 18 0 0 0 29 23a18 18 0 0 0-12.400 4.700c-.5.5-1.200.5-1.700 0l-4.300-4.200c-.5-.5-.5-1.300 0-1.800A27 27 0 0 1 29 14.500Z" />
          <path d="M29 28.500c3.200 0 6 1.100 8.200 3 .5.5.5 1.300 0 1.800l-7.300 7.900c-.5.5-1.300.5-1.800 0l-7.300-7.900c-.5-.5-.5-1.300 0-1.800a12.500 12.500 0 0 1 8.200-3Z" />
        </svg>
        <svg className="mix-blend-multiply" width="95" height="44" viewBox="0 0 95 44" aria-label="Batterie en charge">
          <rect x="2" y="2" width="82" height="40" rx="13" fill="none" stroke="#a9a9a5" strokeWidth="3" />
          <rect x="8" y="7" width="71" height="30" rx="9" fill="#42ff78" />
          <path d="M89 15c3 1.500 4.500 4 4.500 7s-1.500 5.500-4.500 7Z" fill="#73736c" />
          <path
            d="M53 1 27 25h17l-7 17 27-25H48Z"
            fill="#b2aa9c"
            stroke="#ffffff"
            strokeWidth="5"
            strokeLinejoin="round"
            paintOrder="stroke"
          />
        </svg>
      </div>
    </header>
  );
}

function ImageIcon() {
  return (
    <svg width="74" height="60" viewBox="0 0 74 60" aria-hidden="true">
      <rect x="3.500" y="3.500" width="67" height="53" rx="6" fill="none" stroke="#0f9f50" strokeWidth="5" />
      <circle cx="23" cy="23" r="7.500" fill="#0f9f50" />
      <path
        d="M5 46 17 35.500q2-1.500 4 0l7 6.500L43.500 28q2.500-2 5 0L69 46v4q0 6-6 6H11q-6 0-6-6Z"
        fill="#0f9f50"
      />
    </svg>
  );
}

function MapIcon() {
  return (
    <svg width="66" height="64" viewBox="0 0 66 64" fill="none" stroke="#0f9f50" strokeLinejoin="round" aria-hidden="true">
      <path
        d="M4.500 13.500Q3 14.500 3 17v41q0 3.500 3 1.500L23 49.500 42.500 60.500 61.500 49.500Q63 48.500 63 46V5.500q0-3.500-3-1.500L42.500 15 23 3Z"
        strokeWidth="5"
      />
      <path d="M23 3v46 M42.500 15v45" strokeWidth="4" />
    </svg>
  );
}

function LinkIcon() {
  return (
    <svg
      width="68"
      height="70"
      viewBox="0 0 68 70"
      fill="none"
      stroke="#0f9f50"
      strokeWidth="5"
      strokeLinecap="butt"
      aria-hidden="true"
    >
      <path d="M35.500 47.500A15 15 0 0 1 25 22.500L38 9.500A15.500 15.500 0 0 1 60 31.500L53 38.500" transform="translate(1 -1)" />
      <path d="M32.500 22.500A15 15 0 0 1 43 47.500L30 60.500A15.500 15.500 0 0 1 8 38.500L15 31.500" transform="translate(-1 1)" />
    </svg>
  );
}

function FileIcon() {
  return (
    <svg
      width="56"
      height="68"
      viewBox="0 0 56 68"
      fill="none"
      stroke="#0f9f50"
      strokeWidth="5"
      strokeLinecap="round"
      strokeLinejoin="round"
      aria-hidden="true"
    >
      <path d="M10 3.500h16.500q3.500 0 6 2.500L50 24q2.500 2.500 2.500 6v27.500q0 7-7 7h-35q-7 0-7-7v-47q0-7 7-7Z" />
      <path d="M28 5v17q0 6 6 6h17" strokeWidth="4.500" />
      <path d="M28 36v21 M18 48l10 9.500L38 48" strokeWidth="4.500" />
    </svg>
  );
}

function Chevron() {
  return (
    <svg width="22" height="38" viewBox="0 0 22 38" fill="none" aria-hidden="true">
      <path d="M4 4 18.500 19 4 34" stroke="#aaa69d" strokeWidth="5" strokeLinecap="round" strokeLinejoin="round" />
    </svg>
  );
}

const options: { title: string; detail: string; icon: ReactNode }[] = [
  { title: "Image", detail: "Carte sur une photo ou un dégradé", icon: <ImageIcon /> },
  { title: "Carte", detail: "La carte de ta balade en fond", icon: <MapIcon /> },
  {
    title: "Partager la balade",
    detail: "Une page web avec la carte interactive · sans app",
    icon: <LinkIcon />,
  },
  { title: "Fichier GPX", detail: "Le tracé pour Garmin, Strava, Google Earth", icon: <FileIcon /> },
];

function ShareSheet() {
  return (
    <section
      aria-labelledby="sheet-title"
      className="mx-6 mt-auto mb-6 flex flex-col items-center rounded-t-[112px] rounded-b-[162px] bg-[#f7f5ee] px-[58px] pt-3.5 pb-[274px] shadow-[0_0_70px_rgba(0,0,0,0.14)]"
    >
      <div className="h-[15px] w-[104px] rounded-full bg-[#bcb9b6]" />
      <h1 id="sheet-title" className="mt-[62px] text-[48px] leading-[60px] font-semibold">
        Partager la balade
      </h1>
      <ul className="mt-[164px] w-full rounded-[76px] bg-[#e8e5e1]">
        {options.map((o, i) => (
          <li key={o.title}>
            {i > 0 && <hr className="mr-[58px] ml-[185px] h-[3px] border-0 bg-[#d1cdca]" />}
            <button type="button" className="flex h-[219px] w-full items-center gap-[33px] pt-0.5 pr-14 pl-14 text-left">
              <span className="flex w-24 shrink-0 justify-center">{o.icon}</span>
              <span className="flex min-w-0 flex-1 flex-col gap-2">
                <span className="text-[47px] leading-[60px]">{o.title}</span>
                <span className="text-[34px] leading-[44px] text-[#7f7b74]">{o.detail}</span>
              </span>
              <Chevron />
            </button>
          </li>
        ))}
      </ul>
    </section>
  );
}

export default function App() {
  return (
    <main className="relative flex min-h-screen flex-col overflow-hidden bg-[#c8c9c3] font-['Inter',sans-serif] text-black">
      <CityMap />
      <div className="relative flex flex-1 flex-col">
        <StatusBar />
        <nav className="mt-56 flex justify-between px-12">
          <button
            type="button"
            aria-label="Retour"
            className="flex size-[114px] items-center justify-center rounded-full bg-[#bfbdb8]"
          >
            <svg width="30" height="48" viewBox="0 0 30 48" fill="none" className="mr-1">
              <path d="M25 5 6 24 25 43" stroke="#1b1a16" strokeWidth="6" strokeLinecap="round" strokeLinejoin="round" />
            </svg>
          </button>
          <button
            type="button"
            aria-label="Plus d’options"
            className="flex size-[114px] items-center justify-center gap-2 rounded-full bg-[#bfbdb8]"
          >
            <span className="size-2.5 rounded-full bg-[#1b1a16]" />
            <span className="size-2.5 rounded-full bg-[#1b1a16]" />
            <span className="size-2.5 rounded-full bg-[#1b1a16]" />
          </button>
        </nav>
        <ShareSheet />
      </div>
    </main>
  );
}
